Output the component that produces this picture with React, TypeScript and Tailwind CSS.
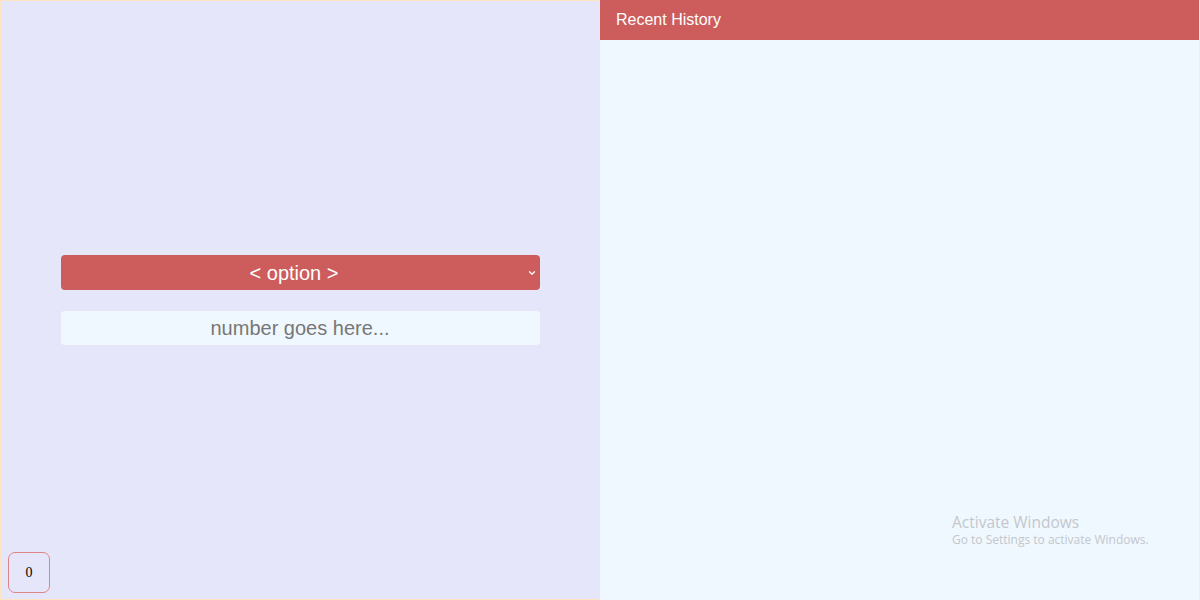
import { ChevronDown } from 'lucide-react'

export default function App() {
  return (
    <div className="relative flex h-[600px] w-[1200px] font-['Liberation_Sans',Arial,sans-serif]">
      <div className="flex h-full w-[600px] flex-col items-center justify-center gap-[21px] border border-[#ffe4c4] bg-[#e6e6fa]">
        <div className="relative flex h-[35px] w-[479px] items-center justify-center rounded-[4px] bg-[#cd5c5c] pr-[12px] text-[20px] text-white">
          &lt; option &gt;
          <ChevronDown className="absolute right-[3px] top-[13px] h-[10px] w-[10px]" strokeWidth={3} />
        </div>
        <input
          placeholder="number goes here..."
          className="h-[34px] w-[479px] rounded-[4px] bg-[#f0f8ff] text-center text-[20px] text-gray-700 placeholder:text-[#777] focus:outline-none"
        />
      </div>
      <div className="flex h-full w-[600px] flex-col border-r border-[#f5efe6] bg-[#f0f8ff]">
        <div className="flex h-[40px] items-center bg-[#cd5c5c] px-4 text-[16px] text-white">Recent History</div>
        <div className="flex flex-1 flex-col items-start justify-end pb-[52px] pl-[352px] font-['Open_Sans',sans-serif] text-[#c3c7cc]">
          <div className="text-[15.5px] leading-[20px]">Activate Windows</div>
          <div className="text-[12px] leading-[16px]">Go to Settings to activate Windows.</div>
        </div>
      </div>
      <div className="absolute bottom-[7px] left-[8px] flex h-[41px] w-[42px] items-center justify-center rounded-[7px] border border-[#e08585] font-['Liberation_Serif',serif] text-[14px] text-black">
        0
      </div>
    </div>
  )
}
